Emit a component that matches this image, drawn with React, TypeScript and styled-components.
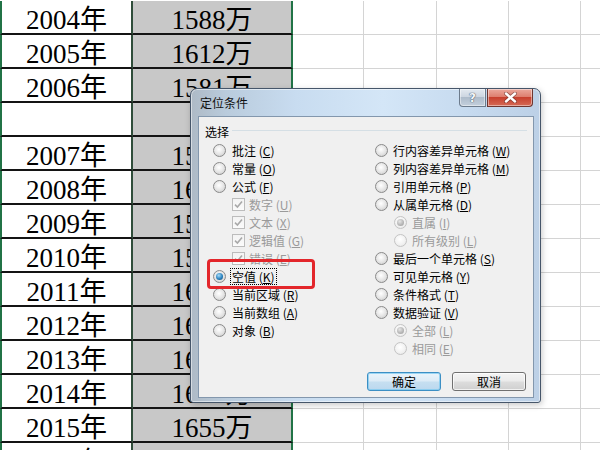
import React from "react";
import styled, { createGlobalStyle } from "styled-components";

const Global = createGlobalStyle`
  html, body { margin: 0; padding: 0; background: #fff; }
  body { width: 600px; height: 450px; overflow: hidden; }
  #root { width: 600px; height: 450px; overflow: hidden; }
`;

const Page = styled.div`
  position: relative;
  width: 600px;
  height: 450px;
  overflow: hidden;
  background: #fff;
`;

const Sheet = styled.div`
  display: flex;
  flex-direction: column;
  padding-top: 1px;
`;

const Row = styled.div`
  display: grid;
  grid-template-columns: 133px 160px 71px 73px 72px 72px 72px;
  height: 34px;
  flex-shrink: 0;
`;

const DataCell = styled.div<{ $kind: "year" | "value" }>`
  box-sizing: border-box;
  height: 34px;
  border-bottom: 2px solid #141414;
  border-left: ${(p) => (p.$kind === "year" ? "2px solid #217346" : "none")};
  border-right: 2px solid ${(p) => (p.$kind === "year" ? "#2f4d3a" : "#217346")};
  background: ${(p) => (p.$kind === "value" ? "#c8c8c8" : "#fff")};
  font-family: "Liberation Serif", "Times New Roman", "DejaVu Serif", "Noto Sans CJK SC", serif;
  font-size: 27px;
  line-height: 27px;
  padding-top: 6px;
  text-align: center;
  color: #000;
  white-space: nowrap;
  overflow: hidden;
`;

const EmptyCell = styled.div`
  box-sizing: border-box;
  height: 34px;
  border-right: 1px solid #d4d4d4;
  border-bottom: 1px solid #d4d4d4;
`;

const Dialog = styled.div`
  position: absolute;
  left: 190px;
  top: 88px;
  width: 351px;
  height: 315px;
  box-sizing: border-box;
  border: 1px solid #46566a;
  border-radius: 7px 7px 3px 3px;
  background: linear-gradient(
    90deg,
    #aebac6 0%,
    #b9cbdc 10%,
    #c8dcf0 30%,
    #d4e6f7 55%,
    #c6daef 80%,
    #bcd0e6 100%
  );
  box-shadow: inset 0 0 0 1px rgba(255, 255, 255, 0.5), 1px 2px 6px rgba(0, 0, 0, 0.22);
  display: flex;
  flex-direction: column;
  font-family: "Noto Sans CJK SC", "Liberation Sans", sans-serif;
  font-size: 12px;
  color: #000;
`;

const TitleBar = styled.div`
  height: 27px;
  display: flex;
  align-items: flex-start;
  padding: 0 7px 0 9px;
  flex-shrink: 0;
`;

const Title = styled.div`
  line-height: 27px;
  font-size: 12px;
  color: #101010;
`;

const CaptionButtons = styled.div`
  margin-left: auto;
  display: flex;
  gap: 1px;
  height: 18px;
`;

const CaptionButton = styled.div<{ $variant: "help" | "close" }>`
  box-sizing: border-box;
  height: 18px;
  width: ${(p) => (p.$variant === "help" ? "27px" : "46px")};
  border: 1px solid ${(p) => (p.$variant === "help" ? "#6c7b8c" : "#6e3630")};
  border-top: none;
  border-radius: ${(p) => (p.$variant === "help" ? "0 0 0 4px" : "0 0 4px 0")};
  background: ${(p) =>
    p.$variant === "help"
      ? "linear-gradient(180deg, #e3e9f0 0%, #cdd6e1 45%, #aebccb 50%, #c3cfdc 100%)"
      : "linear-gradient(180deg, #eba89c 0%, #de7f6f 45%, #c8402e 50%, #d56a55 100%)"};
  box-shadow: inset 0 0 0 1px rgba(255, 255, 255, 0.45);
  display: flex;
  align-items: center;
  justify-content: center;
`;

const HelpGlyph = styled.span`
  font-family: "DejaVu Sans", sans-serif;
  font-weight: bold;
  font-size: 12px;
  line-height: 12px;
  color: #f4f6f9;
  text-shadow: 0 0 1px #3b4a5c, 0 0 1px #3b4a5c;
`;

const Client = styled.div`
  position: relative;
  flex: 1;
  margin: 0 6px 4px 7px;
  box-sizing: border-box;
  border: 1px solid #8397ad;
  background: #f0f0f0;
  padding: 5px 0 0 0;
  display: flex;
  flex-direction: column;
`;

const Legend = styled.div`
  display: flex;
  align-items: center;
  height: 18px;
  padding: 0 6px 0 6px;
  &::after {
    content: "";
    flex: 1;
    height: 1px;
    background: #d5dfe5;
    margin-left: 3px;
    margin-top: -2px;
  }
`;

const Columns = styled.div`
  display: flex;
  margin-top: 1px;
  padding-left: 14px;
`;

const Column = styled.div<{ $width?: number }>`
  display: flex;
  flex-direction: column;
  width: ${(p) => (p.$width ? `${p.$width}px` : "auto")};
  flex: ${(p) => (p.$width ? "none" : "1")};
`;

const OptionRow = styled.div<{ $indent?: boolean }>`
  height: 18px;
  display: flex;
  align-items: center;
  padding-left: ${(p) => (p.$indent ? "19px" : "0")};
  white-space: nowrap;
`;

const Radio = styled.span<{ $checked?: boolean; $disabled?: boolean }>`
  position: relative;
  box-sizing: border-box;
  width: 13px;
  height: 13px;
  flex-shrink: 0;
  border-radius: 50%;
  border: 1px solid ${(p) => (p.$disabled ? "#c4c4c4" : "#8a8a8a")};
  background: ${(p) =>
    p.$disabled
      ? "radial-gradient(circle at 45% 40%, #ffffff 0%, #f2f2f2 55%, #e2e2e2 100%)"
      : "radial-gradient(circle at 45% 40%, #ffffff 0%, #e6e6e6 50%, #c6c6c6 100%)"};
  &::after {
    content: "";
    display: ${(p) => (p.$checked ? "block" : "none")};
    position: absolute;
    left: 2px;
    top: 2px;
    width: 7px;
    height: 7px;
    border-radius: 50%;
    background: ${(p) =>
      p.$disabled
        ? "radial-gradient(circle at 40% 35%, #e6e6e6 0%, #b4b4b4 60%, #9a9a9a 100%)"
        : "radial-gradient(circle at 40% 35%, #a8dcf8 0%, #2b83c0 55%, #0e3f68 100%)"};
  }
`;

const CheckBox = styled.span`
  box-sizing: border-box;
  width: 13px;
  height: 13px;
  flex-shrink: 0;
  border: 1px solid #bcbcbc;
  background: linear-gradient(180deg, #f3f3f3 0%, #fbfbfb 100%);
  display: flex;
  align-items: center;
  justify-content: center;
`;

const Label = styled.span<{ $disabled?: boolean; $focus?: boolean; $gap: number }>`
  margin-left: ${(p) => p.$gap}px;
  color: ${(p) => (p.$disabled ? "#9a9a9a" : "#000")};
  line-height: 15px;
  padding: 0 1px;
  outline: ${(p) => (p.$focus ? "1px dotted #000" : "none")};
  text-decoration: none;
`;

const Key = styled.span`
  text-decoration: underline;
  text-underline-offset: 1px;
`;

const Highlight = styled.div`
  position: absolute;
  left: 8px;
  top: 142px;
  width: 108px;
  height: 30px;
  box-sizing: border-box;
  border: 3px solid #e3262b;
  border-radius: 4px;
  pointer-events: none;
`;

const ButtonRow = styled.div`
  display: flex;
  justify-content: flex-end;
  gap: 11px;
  padding-right: 7px;
  margin-top: 15px;
`;

const PushButton = styled.div<{ $default?: boolean }>`
  box-sizing: border-box;
  width: 74px;
  height: 19px;
  border-radius: 3px;
  border: 1px solid ${(p) => (p.$default ? "#3c8fc4" : "#707070")};
  background: ${(p) =>
    p.$default
      ? "linear-gradient(180deg, #eaf4fb 0%, #dcebf6 48%, #c6dff1 52%, #bcd8ee 100%)"
      : "linear-gradient(180deg, #f4f4f4 0%, #ebebeb 48%, #dddddd 52%, #cfcfcf 100%)"};
  box-shadow: inset 0 0 0 1px ${(p) => (p.$default ? "rgba(120,200,240,0.7)" : "rgba(255,255,255,0.7)")};
  display: flex;
  align-items: center;
  justify-content: center;
  font-size: 12px;
  line-height: 17px;
  color: #000;
`;

type Opt = {
  label: string;
  key: string;
  kind?: "radio" | "check";
  indent?: boolean;
  disabled?: boolean;
  checked?: boolean;
  focus?: boolean;
};

const leftOpts: Opt[] = [
  { label: "批注", key: "C" },
  { label: "常量", key: "O" },
  { label: "公式", key: "F" },
  { label: "数字", key: "U", kind: "check", indent: true, disabled: true, checked: true },
  { label: "文本", key: "X", kind: "check", indent: true, disabled: true, checked: true },
  { label: "逻辑值", key: "G", kind: "check", indent: true, disabled: true, checked: true },
  { label: "错误", key: "E", kind: "check", indent: true, disabled: true, checked: true },
  { label: "空值", key: "K", checked: true, focus: true },
  { label: "当前区域", key: "R" },
  { label: "当前数组", key: "A" },
  { label: "对象", key: "B" },
];

const rightOpts: Opt[] = [
  { label: "行内容差异单元格", key: "W" },
  { label: "列内容差异单元格", key: "M" },
  { label: "引用单元格", key: "P" },
  { label: "从属单元格", key: "D" },
  { label: "直属", key: "I", indent: true, disabled: true, checked: true },
  { label: "所有级别", key: "L", indent: true, disabled: true },
  { label: "最后一个单元格", key: "S" },
  { label: "可见单元格", key: "Y" },
  { label: "条件格式", key: "T" },
  { label: "数据验证", key: "V" },
  { label: "全部", key: "L", indent: true, disabled: true, checked: true },
  { label: "相同", key: "E", indent: true, disabled: true },
];

const rows: [string, string][] = [
  ["2004年", "1588万"],
  ["2005年", "1612万"],
  ["2006年", "1581万"],
  ["", ""],
  ["2007年", "1594万"],
  ["2008年", "1608万"],
  ["2009年", "1591万"],
  ["2010年", "1592万"],
  ["2011年", "1604万"],
  ["2012年", "1635万"],
  ["2013年", "1640万"],
  ["2014年", "1687万"],
  ["2015年", "1655万"],
  ["2016年", "1687万"],
];

const CheckMark = () => (
  <svg width="9" height="9" viewBox="0 0 9 9">
    <path d="M1 4.6 L3.4 7 L8 1.4" fill="none" stroke="#a9a9a9" strokeWidth="1.6" />
  </svg>
);

const CloseX = () => (
  <svg width="13" height="11" viewBox="0 0 13 11">
    <path d="M2 1.5 L11 9.5 M11 1.5 L2 9.5" stroke="#5b2a26" strokeWidth="4" strokeLinecap="round" opacity="0.55" />
    <path d="M2 1.5 L11 9.5 M11 1.5 L2 9.5" stroke="#ffffff" strokeWidth="2.4" strokeLinecap="round" />
  </svg>
);

const Option = ({ o, gap }: { o: Opt; gap: number }) => (
  <OptionRow $indent={o.indent}>
    {o.kind === "check" ? (
      <CheckBox>{o.checked && <CheckMark />}</CheckBox>
    ) : (
      <Radio $checked={o.checked} $disabled={o.disabled} />
    )}
    <Label $disabled={o.disabled} $focus={o.focus} $gap={o.kind === "check" ? 3 : gap}>
      {`${o.label} (`}
      <Key>{o.key}</Key>
      {")"}
    </Label>
  </OptionRow>
);

export default function App() {
  return (
    <Page>
      <Global />
      <Sheet>
        {rows.map(([y, v], i) => (
          <Row key={i}>
            <DataCell $kind="year">{y}</DataCell>
            <DataCell $kind="value">{v}</DataCell>
            <EmptyCell />
            <EmptyCell />
            <EmptyCell />
            <EmptyCell />
            <EmptyCell />
          </Row>
        ))}
      </Sheet>
      <Dialog>
        <TitleBar>
          <Title>定位条件</Title>
          <CaptionButtons>
            <CaptionButton $variant="help">
              <HelpGlyph>?</HelpGlyph>
            </CaptionButton>
            <CaptionButton $variant="close">
              <CloseX />
            </CaptionButton>
          </CaptionButtons>
        </TitleBar>
        <Client>
          <Legend>选择</Legend>
          <Columns>
            <Column $width={162}>
              {leftOpts.map((o, i) => (
                <Option key={i} o={o} gap={5} />
              ))}
            </Column>
            <Column>
              {rightOpts.map((o, i) => (
                <Option key={i} o={o} gap={4} />
              ))}
            </Column>
          </Columns>
          <ButtonRow>
            <PushButton $default>确定</PushButton>
            <PushButton>取消</PushButton>
          </ButtonRow>
          <Highlight />
        </Client>
      </Dialog>
    </Page>
  );
}
